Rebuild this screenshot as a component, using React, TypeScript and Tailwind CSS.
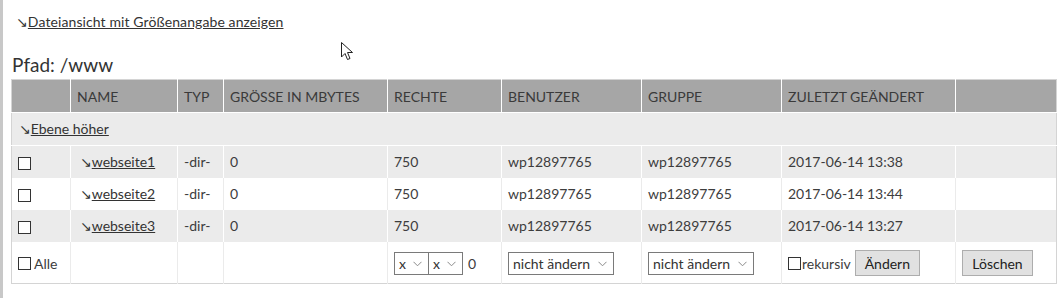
import React from "react";

const font = { fontFamily: "Lato, 'Noto Sans', sans-serif" };

function Arrow() {
  return <span className="text-[14px]" style={{ fontFamily: "'DejaVu Sans', sans-serif" }}>↘</span>;
}

function Box() {
  return <span className="inline-block w-[13px] h-[13px] border border-[#333] bg-white align-middle" />;
}

function Chevron() {
  return (
    <svg width="9" height="6" viewBox="0 0 9 6" className="absolute right-[6px] top-[8px]">
      <path d="M0.5 0.8 L4.5 4.8 L8.5 0.8" fill="none" stroke="#8a8a8a" strokeWidth="1" />
    </svg>
  );
}

function Sel({ w, text }: { w: string; text: string }) {
  return (
    <span className={`relative inline-flex items-center h-[23px] border border-[#7a7a7a] bg-white pl-[4px] text-[14px] text-[#333] ${w}`}>
      {text}
      <Chevron />
    </span>
  );
}

const rows = [
  { name: "webseite1", date: "2017-06-14 13:38", gray: true },
  { name: "webseite2", date: "2017-06-14 13:44", gray: false },
  { name: "webseite3", date: "2017-06-14 13:27", gray: true },
];

export default function App() {
  return (
    <div className="relative w-[1061px] h-[298px] bg-white border-l-[3px] border-[#c8c8c8] text-[#3d3d3d]" style={font}>
      <div className="pl-[13px] pt-[12px] h-[20px] leading-[20px] text-[14px] tracking-[0.1px] text-[#333]">
        <Arrow />
        <span className="underline">Dateiansicht mit Größenangabe anzeigen</span>
      </div>
      <div className="pl-[9px] mt-[33px] text-[19px] leading-[24px] text-[#333]">Pfad: /www</div>
      <table className="ml-[8px] mt-[2px] w-[1046px] table-fixed border-collapse border border-[#d4d4d4] text-[14px]">
        <colgroup>
          <col className="w-[59px]" />
          <col className="w-[107px]" />
          <col className="w-[46px]" />
          <col className="w-[164px]" />
          <col className="w-[114px]" />
          <col className="w-[140px]" />
          <col className="w-[140px]" />
          <col className="w-[174px]" />
          <col className="w-[101px]" />
        </colgroup>
        <thead>
          <tr className="bg-[#a6a6a6] text-left text-[#3a3a3a] uppercase">
            {["", "Name", "Typ", "Grösse in MBytes", "Rechte", "Benutzer", "Gruppe", "Zuletzt geändert", ""].map((h, i) => (
              <th key={i} className="h-[33px] font-normal px-[6px] border-l border-white first:border-l-0 border-b">
                {h}
              </th>
            ))}
          </tr>
        </thead>
        <tbody>
          <tr className="bg-[#ebebeb] border-b border-white">
            <td colSpan={9} className="h-[33px] pl-[7px] text-[#333]">
              <Arrow />
              <span className="underline">Ebene höher</span>
            </td>
          </tr>
          {rows.map((r) => {
            const b = r.gray ? "border-white" : "border-[#ebebeb]";
            return (
              <tr key={r.name} className={r.gray ? "bg-[#ebebeb]" : "bg-white"}>
                <td className="h-[32px] pl-[6px]"><Box /></td>
                <td className={`border-l ${b} pl-[9px] text-[#333]`}>
                  <Arrow />
                  <span className="underline">{r.name}</span>
                </td>
                <td className={`border-l ${b} px-[6px]`}>-dir-</td>
                <td className={`border-l ${b} px-[6px]`}>0</td>
                <td className={`border-l ${b} px-[6px]`}>750</td>
                <td className={`border-l ${b} px-[6px]`}>wp12897765</td>
                <td className={`border-l ${b} px-[6px]`}>wp12897765</td>
                <td className={`border-l ${b} px-[6px]`}>{r.date}</td>
                <td className={`border-l ${b}`}></td>
              </tr>
            );
          })}
          <tr className="bg-white">
            <td className="h-[42px] pl-[6px] pt-[3px]">
              <span className="inline-flex items-center gap-[3px]"><Box /><span>Alle</span></span>
            </td>
            <td className="border-l border-[#ebebeb]"></td>
            <td className="border-l border-[#ebebeb]"></td>
            <td className="border-l border-[#ebebeb]"></td>
            <td className="border-l border-[#ebebeb] pl-[6px] pt-[2px]">
              <span className="inline-flex items-center">
                <Sel w="w-[35px]" text="x" />
                <Sel w="w-[35px] -ml-[1px]" text="x" />
                <span className="ml-[5px]">0</span>
              </span>
            </td>
            <td className="border-l border-[#ebebeb] pl-[6px] pt-[2px]">
              <Sel w="w-[106px]" text="nicht ändern" />
            </td>
            <td className="border-l border-[#ebebeb] pl-[6px] pt-[2px]">
              <Sel w="w-[106px]" text="nicht ändern" />
            </td>
            <td className="border-l border-[#ebebeb] pl-[6px] pt-[2px]">
              <span className="inline-flex items-center">
                <Box />
                <span className="ml-[1px]">rekursiv</span>
                <span className="ml-[4px] inline-flex items-center justify-center w-[65px] h-[26px] bg-[#e1e1e1] border border-[#adadad] text-[#222]">Ändern</span>
              </span>
            </td>
            <td className="border-l border-[#ebebeb] pl-[6px] pt-[2px]">
              <span className="inline-flex items-center justify-center w-[71px] h-[26px] bg-[#e1e1e1] border border-[#adadad] text-[#222]">Löschen</span>
            </td>
          </tr>
        </tbody>
      </table>
      <svg className="absolute left-[338px] top-[42px]" width="14" height="20" viewBox="0 0 14 20">
        <path d="M0.5 0.5 L0.5 15 L4 11.5 L6.5 17.5 L9 16.5 L6.5 10.5 L11.5 10.5 Z" fill="white" stroke="#222" strokeWidth="1" strokeLinejoin="miter" />
      </svg>
    </div>
  );
}
